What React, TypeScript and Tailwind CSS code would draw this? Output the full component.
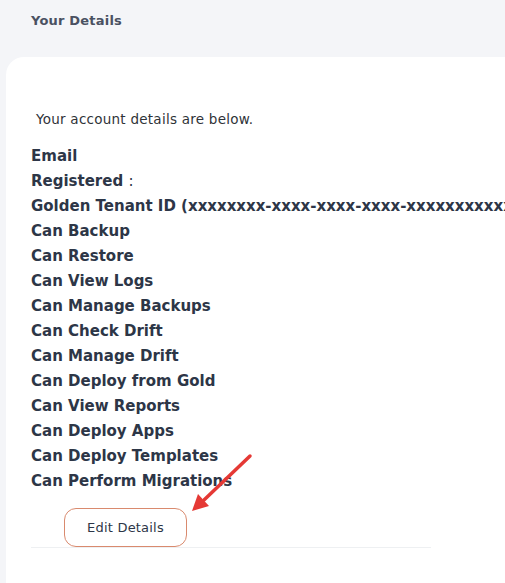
import React from 'react'

const perms = [
  'Can Backup',
  'Can Restore',
  'Can View Logs',
  'Can Manage Backups',
  'Can Check Drift',
  'Can Manage Drift',
  'Can Deploy from Gold',
  'Can View Reports',
  'Can Deploy Apps',
  'Can Deploy Templates',
  'Can Perform Migrations',
]

export default function App() {
  return (
    <div className="h-[583px] w-[505px] overflow-hidden bg-[#f4f5f8] font-['DejaVu_Sans',sans-serif]">
      <div className="h-[57px] pl-[31px] pt-[11px]">
        <h1 className="text-[13px] font-semibold tracking-[0.2px] text-[#4a5162]">Your Details</h1>
      </div>

      <div className="ml-[6px] h-[526px] w-[560px] rounded-tl-[18px] bg-white pl-[25px] pt-[52px]">
        <p className="pl-[5px] text-[13.5px] tracking-[0.25px] text-[#2f3338]">Your account details are below.</p>

        <div className="mt-[15px] flex flex-col text-[15px] font-bold leading-[25px] text-[#2d3647]">
          <p>Email</p>
          <p>
            Registered <span className="font-normal">:</span>
          </p>
          <p className="whitespace-nowrap">Golden Tenant ID (xxxxxxxx-xxxx-xxxx-xxxx-xxxxxxxxxxxx)</p>
          {perms.map((p) => (
            <p key={p}>{p}</p>
          ))}
        </div>

        <div className="relative w-[400px] border-b border-[#eef0f2]">
          <div className="pl-[33px] pt-[14px]">
            <button className="h-[39px] w-[123px] rounded-[12px] border border-[#d98a6e] bg-white text-[13px] tracking-[0.2px] text-[#2d3647]">
              Edit Details
            </button>
          </div>
          <svg
            className="absolute left-[153px] top-[-42px]"
            width="72"
            height="64"
            viewBox="0 0 72 64"
          >
            <line x1="66" y1="4" x2="20" y2="48" stroke="#e53935" strokeWidth="3.5" strokeLinecap="round" />
            <polygon points="8,59 25,54 14,42" fill="#e53935" />
          </svg>
        </div>
      </div>
    </div>
  )
}
